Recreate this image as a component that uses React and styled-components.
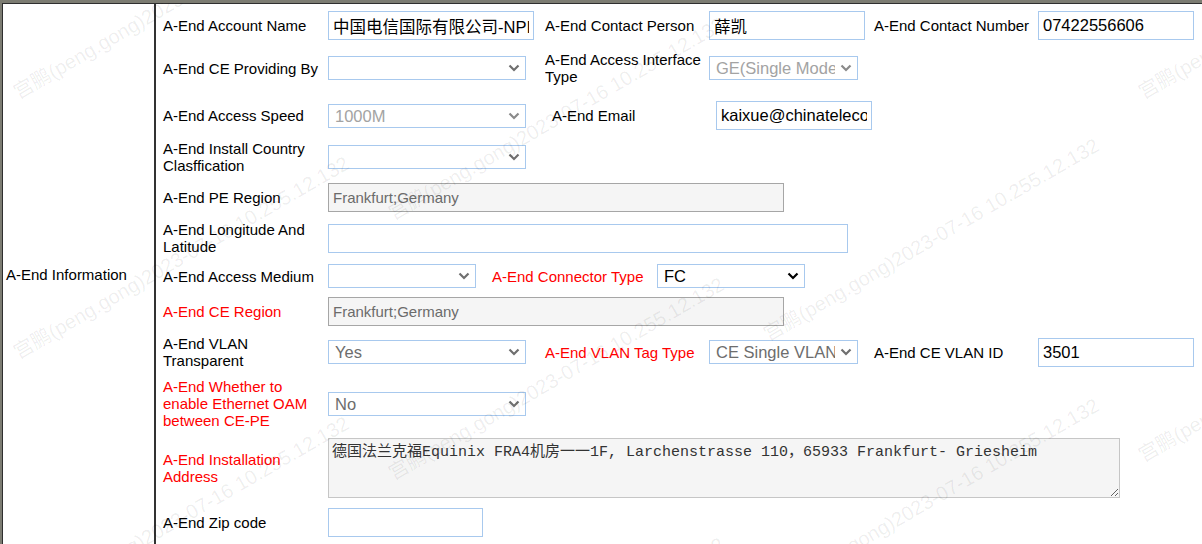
import React from 'react';
import styled, { createGlobalStyle } from 'styled-components';

const GlobalStyle = createGlobalStyle`
  html, body {
    margin: 0;
    padding: 0;
    background: #fff;
  }
  body {
    font-family: "Liberation Sans", Arial, "Noto Sans CJK SC", sans-serif;
    overflow: hidden;
  }
`;

const Frame = styled.div`
  position: relative;
  height: 544px;
  box-sizing: border-box;
  border-top: 3px solid #7c7c72;
  border-left: 2px solid #7c7c72;
  overflow: hidden;
`;

const InfoTable = styled.div`
  display: flex;
  height: 100%;
  box-sizing: border-box;
  border-top: 1px solid #2f2f2f;
  border-left: 1px solid #2f2f2f;
`;

const SectionCell = styled.div`
  flex: 0 0 153px;
  box-sizing: border-box;
  display: flex;
  align-items: center;
  padding-left: 3px;
  border-right: 2px solid #333;
  font-size: 15px;
  color: #000;
`;

const FieldsCell = styled.div`
  flex: 1;
  display: flex;
  flex-direction: column;
  padding-left: 7px;
`;

const Row = styled.div`
  display: flex;
  align-items: center;
  margin-top: ${(p) => p.$mt ?? 9}px;
`;

const Label = styled.div`
  flex: 0 0 ${(p) => p.$w ?? 165}px;
  box-sizing: border-box;
  margin-left: ${(p) => p.$ml ?? 0}px;
  padding-right: 4px;
  font-size: 15px;
  line-height: 17px;
  color: ${(p) => (p.$required ? '#ff0000' : '#000')};
`;

const TextInput = styled.input`
  flex: 0 0 ${(p) => p.$w}px;
  width: ${(p) => p.$w}px;
  min-width: 0;
  box-sizing: border-box;
  height: 29px;
  margin: 0;
  padding: 0 4px;
  border: 1px solid #a8c9ee;
  background: #fff;
  font-family: "Liberation Sans", Arial, "Noto Sans CJK SC", sans-serif;
  font-size: 16.5px;
  color: #000;
  outline: none;
`;

const ReadOnlyInput = styled(TextInput)`
  border-color: #a6a6a6;
  background: #f5f5f5;
  font-size: 15px;
  color: #6b6b6b;
`;

const SelectWrap = styled.div`
  position: relative;
  flex: 0 0 ${(p) => p.$w}px;
  height: 24px;
`;

const Select = styled.select`
  appearance: none;
  -webkit-appearance: none;
  width: 100%;
  height: 100%;
  box-sizing: border-box;
  margin: 0;
  padding: 0 22px 0 6px;
  border: 1px solid #a8c9ee;
  border-radius: 0;
  background: #fff;
  font-family: "Liberation Sans", Arial, sans-serif;
  font-size: 16.5px;
  color: ${(p) => p.$tone};
  outline: none;
`;

const Chevron = styled.svg`
  position: absolute;
  right: 6px;
  top: 50%;
  transform: translateY(-50%);
  pointer-events: none;
`;

const AddressArea = styled.textarea`
  display: block;
  flex: 0 0 792px;
  width: 792px;
  box-sizing: border-box;
  height: 60px;
  margin: 0;
  padding: 5px 3px;
  border: 1px solid #c6c6c6;
  background: #f5f5f5;
  font-family: "Liberation Mono", "Noto Sans CJK SC", monospace;
  font-size: 15px;
  line-height: 18px;
  color: #333;
  outline: none;
`;

const Watermark = styled.div`
  position: absolute;
  inset: 0;
  overflow: hidden;
  pointer-events: none;
  z-index: 2;
`;

const Mark = styled.span.attrs(({ $x, $y }) => ({
  style: { left: `${$x}px`, top: `${$y}px` },
}))`
  position: absolute;
  white-space: nowrap;
  font-family: "Liberation Sans", "Noto Sans CJK SC", sans-serif;
  font-size: 20px;
  line-height: 20px;
  color: rgba(0, 0, 0, 0.07);
  transform: rotate(-30deg);
  transform-origin: 0 100%;
`;

const GRAY = '#a3a3a3';
const DIM = '#6d6d6d';

const Dropdown = ({ w, value, tone = DIM, arrow = '#6f6f6f' }) => (
  <SelectWrap $w={w}>
    <Select $tone={tone} defaultValue={value}>
      <option value={value}>{value}</option>
    </Select>
    <Chevron width="12" height="8" viewBox="0 0 12 8">
      <polyline points="1.5,1.5 6,6 10.5,1.5" fill="none" stroke={arrow} strokeWidth="2.2" />
    </Chevron>
  </SelectWrap>
);

const markText = '宫鹏(peng.gong)2023-07-16 10.255.12.132';
const diagonals = [-263, 100, 360, 620];
const marks = [];
diagonals.forEach((y0) => {
  for (let i = 0; i < 4; i += 1) {
    marks.push({ x: 18 + 375 * i, y: y0 + 121 * i - 21 });
  }
});

const address = '德国法兰克福Equinix FRA4机房一一1F, Larchenstrasse 110，65933 Frankfurt- Griesheim';

export default function App() {
  return (
    <>
      <GlobalStyle />
      <Frame>
        <InfoTable>
          <SectionCell>A-End Information</SectionCell>
          <FieldsCell>
            <Row $mt={7}>
              <Label>A-End Account Name</Label>
              <TextInput $w={206} defaultValue="中国电信国际有限公司-NPI" />
              <Label $ml={11} $w={164}>A-End Contact Person</Label>
              <TextInput $w={156} defaultValue="薛凯" />
              <Label $ml={9} $w={164}>A-End Contact Number</Label>
              <TextInput $w={156} defaultValue="07422556606" />
            </Row>
            <Row $mt={11}>
              <Label>A-End CE Providing By</Label>
              <Dropdown w={198} value="" />
              <Label $ml={19} $w={164}>A-End Access Interface Type</Label>
              <Dropdown w={149} value="GE(Single Mode)" tone={GRAY} arrow="#8a8a8a" />
            </Row>
            <Row $mt={16}>
              <Label>A-End Access Speed</Label>
              <Dropdown w={198} value="1000M" tone={GRAY} arrow="#8a8a8a" />
              <Label $ml={26} $w={164}>A-End Email</Label>
              <TextInput $w={156} defaultValue="kaixue@chinatelecom.com" />
            </Row>
            <Row $mt={10}>
              <Label>A-End Install Country Clasffication</Label>
              <Dropdown w={198} value="" />
            </Row>
            <Row>
              <Label>A-End PE Region</Label>
              <ReadOnlyInput $w={456} readOnly defaultValue="Frankfurt;Germany" />
            </Row>
            <Row>
              <Label>A-End Longitude And Latitude</Label>
              <TextInput $w={520} defaultValue="" />
            </Row>
            <Row $mt={9}>
              <Label>A-End Access Medium</Label>
              <Dropdown w={148} value="" />
              <Label $ml={16} $w={165} $required>A-End Connector Type</Label>
              <Dropdown w={148} value="FC" tone="#000" arrow="#000" />
            </Row>
            <Row>
              <Label $required>A-End CE Region</Label>
              <ReadOnlyInput $w={456} readOnly defaultValue="Frankfurt;Germany" />
            </Row>
            <Row>
              <Label>A-End VLAN Transparent</Label>
              <Dropdown w={198} value="Yes" />
              <Label $ml={19} $w={164} $required>A-End VLAN Tag Type</Label>
              <Dropdown w={149} value="CE Single VLAN" />
              <Label $ml={16} $w={164}>A-End CE VLAN ID</Label>
              <TextInput $w={156} defaultValue="3501" />
            </Row>
            <Row>
              <Label $required>A-End Whether to enable Ethernet OAM between CE-PE</Label>
              <Dropdown w={198} value="No" />
            </Row>
            <Row>
              <Label $required>A-End Installation Address</Label>
              <AddressArea readOnly defaultValue={address} />
            </Row>
            <Row $mt={10}>
              <Label>A-End Zip code</Label>
              <TextInput $w={155} defaultValue="" />
            </Row>
          </FieldsCell>
        </InfoTable>
        <Watermark>
          {marks.map((m) => (
            <Mark key={`${m.x}-${m.y}`} $x={m.x} $y={m.y}>{markText}</Mark>
          ))}
        </Watermark>
      </Frame>
    </>
  );
}
